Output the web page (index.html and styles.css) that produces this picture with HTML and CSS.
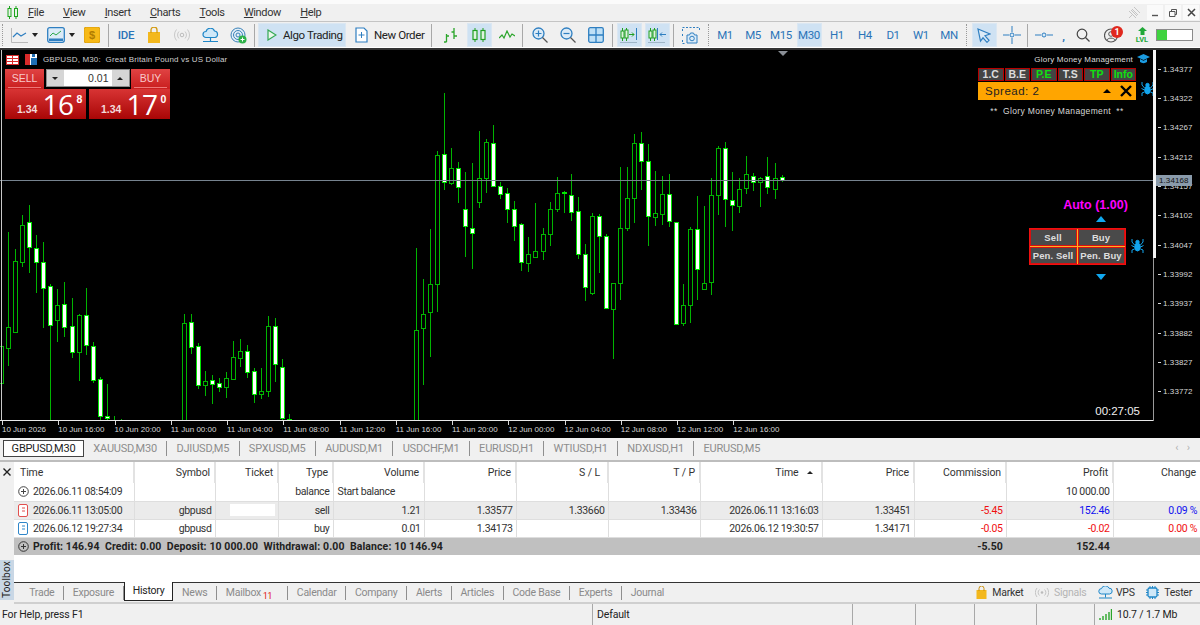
FILE: index.html
```html
<!DOCTYPE html>
<html lang="en">
<head>
  <meta charset="UTF-8">
  <title>GBPUSD,M30</title>
  <link rel="stylesheet" href="styles.css">
</head>
<body>

  <!-- menu -->
  <div class="menubar">
    <svg class="menu-logo" width="12" height="13" viewBox="0 0 12 13"><path d="M2.5 0v13M9 0v13" stroke="#1fa51f"/><rect x="1" y="2.5" width="3" height="8" fill="#e6f5e6" stroke="#1fa51f"/><rect x="7.5" y="2.5" width="3" height="8" fill="#e6f5e6" stroke="#1fa51f"/></svg>
    <span class="menu-item"><u>F</u>ile</span>
    <span class="menu-item"><u>V</u>iew</span>
    <span class="menu-item"><u>I</u>nsert</span>
    <span class="menu-item"><u>C</u>harts</span>
    <span class="menu-item"><u>T</u>ools</span>
    <span class="menu-item"><u>W</u>indow</span>
    <span class="menu-item"><u>H</u>elp</span>
    <div class="win-btns">
      <svg class="win-pin" width="14" height="14" viewBox="0 0 14 14"><path d="M2 12 6 8M5 3l6 6M7 1l6 6M4 4 10 10M2 5l7 7" stroke="#c4c4c4" fill="none"/></svg>
      <span class="win-btn"><svg width="8" height="8" viewBox="0 0 8 8"><path d="M1 6.5h6" stroke="#555" stroke-width="1.4"/></svg></span>
      <span class="win-btn"><svg width="10" height="10" viewBox="0 0 10 10"><path d="M1.5 3.5h5.5v5h-5.500zM3.500 3.500v-2h5v5h-1.500" fill="none" stroke="#555"/></svg></span>
      <span class="win-btn"><svg width="9" height="9" viewBox="0 0 9 9"><path d="M1 1l7 7M8 1l-7 7" stroke="#444" stroke-width="1.500"/></svg></span>
    </div>
  </div>

  <!-- toolbar -->
  <div class="toolbar">
    <i class="grip first-grip"></i>
    <div class="tool-drop">
      <svg width="17" height="15" viewBox="0 0 17 15"><path d="M.5 0v14.500H17" stroke="#b9b9b9" fill="none"/><path d="M2 9l4-4 4 3 5-3" stroke="#2f7fc1" fill="none" stroke-width="1.200"/></svg>
      <b class="caret"></b>
    </div>
    <div class="tool-drop">
      <svg width="18" height="16" viewBox="0 0 18 16"><rect x=".7" y=".7" width="16.600" height="14.600" rx="2" fill="#dcebf7" stroke="#2f7fc1" stroke-width="1.300"/><rect x="2" y="11.500" width="14" height="2.500" fill="#2f7fc1"/><path d="M3 9l3-3 3 2 5-4" stroke="#2aa84a" fill="none"/></svg>
      <b class="caret"></b>
    </div>
    <div class="tool"><svg width="16" height="16" viewBox="0 0 16 16"><rect width="16" height="16" rx="2.500" fill="#f7b917" stroke="#d79a08"/><text x="8" y="12" class="ico-dollar">$</text></svg></div>
    <i class="sep sep-a"></i>
    <div class="tool tool-ide">IDE</div>
    <div class="tool"><svg width="14" height="16" viewBox="0 0 14 16"><path d="M1 5h12v11H1z" fill="#f3b81d"/><path d="M4 6V3a3 3 0 0 1 6 0v3" fill="none" stroke="#d39a10" stroke-width="1.300"/></svg></div>
    <div class="tool"><svg width="16" height="12" viewBox="0 0 16 12"><circle cx="8" cy="6" r="1.800" fill="none" stroke="#bbb"/><path d="M5 2.500a5 5 0 0 0 0 7M11 2.500a5 5 0 0 1 0 7M2.500 .5a8.500 8.500 0 0 0 0 11M13.500 .5a8.500 8.500 0 0 1 0 11" fill="none" stroke="#c8c8c8"/></svg></div>
    <div class="tool"><svg width="17" height="15" viewBox="0 0 17 15"><path d="M4 9.500a3 3 0 0 1 0-6 4.500 4.500 0 0 1 8.500-.500 3.300 3.300 0 0 1 .500 6.500z" fill="#cfe8f8" stroke="#1f86c7" stroke-width="1.200"/><path d="M8.500 9.500V13M1 13.500h15" stroke="#1f86c7" stroke-width="1.200"/></svg></div>
    <div class="tool"><svg width="17" height="17" viewBox="0 0 17 17"><circle cx="8" cy="8" r="7" fill="#e2eef7" stroke="#3a82b8"/><circle cx="8" cy="8" r="4.500" fill="none" stroke="#3a82b8"/><circle cx="8" cy="8" r="2" fill="none" stroke="#3a82b8"/><circle cx="12.500" cy="12.500" r="4" fill="#2fb24a"/><path d="M12.500 10.500v4M10.500 12.500h4" stroke="#fff"/></svg></div>
    <i class="sep sep-b"></i>
    <div class="algo-btn">
      <svg width="10" height="12" viewBox="0 0 10 12"><path d="M1 1l8 5-8 5z" fill="#e9f7ea" stroke="#33a853" stroke-width="1.200"/></svg>
      <span>Algo Trading</span>
    </div>
    <div class="new-order">
      <svg width="13" height="16" viewBox="0 0 13 16"><path d="M1 1h8l3 3v11H1z" fill="#fff" stroke="#2f7fc1" stroke-width="1.200"/><path d="M6.500 5v6M3.500 8h6" stroke="#2f7fc1"/></svg>
      <span>New Order</span>
    </div>
    <i class="sep sep-c"></i>
    <div class="tool"><svg width="16" height="16" viewBox="0 0 16 16"><path d="M3.500 7v8M1 15h2.500M3.500 9H6M11 1v11M8.500 5H11M11 9h3" stroke="#2aa52a" stroke-width="1.300" fill="none"/></svg></div>
    <div class="tool active"><svg width="14" height="14" viewBox="0 0 14 14"><path d="M3 0v14M11 0v14" stroke="#21a021"/><rect x="1" y="2.500" width="4" height="9" fill="#dff3df" stroke="#21a021" stroke-width="1.200"/><rect x="9" y="2.500" width="4" height="9" fill="#dff3df" stroke="#21a021" stroke-width="1.200"/></svg></div>
    <div class="tool"><svg width="16" height="10" viewBox="0 0 16 10"><path d="M0 8l3-3 2 3 3-7 3 6 2-3 3 2" stroke="#2aa52a" stroke-width="1.200" fill="none"/></svg></div>
    <i class="sep sep-d"></i>
    <div class="tool"><svg width="16" height="16" viewBox="0 0 16 16"><circle cx="6.500" cy="6.500" r="5.500" fill="#dcebf7" stroke="#2f7fc1" stroke-width="1.300"/><path d="M10.500 10.500 15.500 15.500" stroke="#555" stroke-width="1.300"/><path d="M3.500 6.500h6M6.500 3.500v6" stroke="#2f7fc1" stroke-width="1.200"/></svg></div>
    <div class="tool"><svg width="16" height="16" viewBox="0 0 16 16"><circle cx="6.500" cy="6.500" r="5.500" fill="#dcebf7" stroke="#2f7fc1" stroke-width="1.300"/><path d="M10.500 10.500 15.500 15.500" stroke="#555" stroke-width="1.300"/><path d="M3.500 6.500h6" stroke="#2f7fc1" stroke-width="1.200"/></svg></div>
    <div class="tool"><svg width="16" height="16" viewBox="0 0 16 16"><rect x=".7" y=".7" width="14.600" height="14.600" rx="1.500" fill="#bfe0f6" stroke="#2f7fc1" stroke-width="1.300"/><path d="M8 1v14M1 8h14" stroke="#2f7fc1" stroke-width="1.300"/></svg></div>
    <i class="sep sep-e"></i>
    <div class="tool active"><svg width="18" height="15" viewBox="0 0 18 15"><path d="M2.500 0v13M6.500 0v13" stroke="#21a021"/><rect x="1" y="3" width="3" height="7" fill="#dff3df" stroke="#21a021"/><rect x="5" y="2" width="3" height="8" fill="#dff3df" stroke="#21a021"/><path d="M9 6.500h5M12 4.500l2 2-2 2" stroke="#21a021" fill="none"/><path d="M16.500 0v12" stroke="#2f7fc1"/><path d="M0 14.500h17" stroke="#9fb6c8"/></svg></div>
    <div class="tool active"><svg width="18" height="15" viewBox="0 0 18 15"><path d="M2.500 0v13M6.500 0v13" stroke="#21a021"/><rect x="1" y="3" width="3" height="7" fill="#dff3df" stroke="#21a021"/><rect x="5" y="2" width="3" height="8" fill="#dff3df" stroke="#21a021"/><path d="M9.500 0v12" stroke="#2f7fc1"/><path d="M12 6.500h6M14 4.500l-2 2 2 2" stroke="#2f7fc1" fill="none"/><path d="M0 14.500h17" stroke="#9fb6c8"/></svg></div>
    <i class="sep sep-f"></i>
    <div class="tool"><svg width="18" height="17" viewBox="0 0 18 17"><path d="M.5 4V.5h17V4M.5 7v3M.5 13v3.500h2" stroke="#2f7fc1" stroke-dasharray="2 1.500" fill="none"/><path d="M5 16V8h2.500l1-2h3l1 2H15v8z" fill="#dcebf7" stroke="#2f7fc1"/><circle cx="10" cy="11.500" r="2.300" fill="none" stroke="#2f7fc1"/></svg></div>
    <i class="grip grip-a"></i>
    <div class="tool tf">M1</div>
    <div class="tool tf">M5</div>
    <div class="tool tf">M15</div>
    <div class="tool tf active">M30</div>
    <div class="tool tf">H1</div>
    <div class="tool tf">H4</div>
    <div class="tool tf">D1</div>
    <div class="tool tf">W1</div>
    <div class="tool tf">MN</div>
    <i class="grip grip-b"></i>
    <div class="tool active"><svg width="14" height="15" viewBox="0 0 14 15"><path d="M1 1l12 5-5 1.800 4 4.500-2 2-4-4.500L3.500 13z" fill="#dcebf7" stroke="#2f7fc1" stroke-width="1.200"/></svg></div>
    <div class="tool"><svg width="18" height="18" viewBox="0 0 18 18"><path d="M9 0v6M9 12v6M0 9h6M12 9h6" stroke="#2f7fc1"/><circle cx="9" cy="9" r="2" fill="#dcebf7" stroke="#2f7fc1"/></svg></div>
    <i class="sep sep-g"></i>
    <div class="tool"><svg width="18" height="6" viewBox="0 0 18 6"><path d="M0 3h6M12 3h6" stroke="#2f7fc1"/><circle cx="9" cy="3" r="2" fill="#dcebf7" stroke="#2f7fc1"/></svg></div>
    <div class="tool-comma">,</div>
    <div class="tool"><svg width="14" height="14" viewBox="0 0 14 14"><circle cx="6" cy="6" r="4.800" fill="none" stroke="#444" stroke-width="1.200"/><path d="M9.500 9.500 13.500 13.500" stroke="#444" stroke-width="1.300"/></svg></div>
    <div class="tool user-tool">
      <svg width="15" height="15" viewBox="0 0 15 15"><circle cx="7" cy="7.500" r="6.500" fill="none" stroke="#555" stroke-width="1.200"/><circle cx="7" cy="6" r="2.300" fill="none" stroke="#555"/><path d="M3 12c1-2.500 7-2.500 8 0" fill="none" stroke="#555"/></svg>
      <span class="badge">1</span>
    </div>
    <div class="tool lvl-tool">
      <svg width="9" height="8" viewBox="0 0 9 8"><path d="M4.500 0 9 4H6.500v4h-4V4H0z" fill="#21a838"/></svg>
      <span>LVL</span>
    </div>
    <div class="level-bar"><span class="level-fill"></span></div>
  </div>

  <!-- chart -->
  <div class="chart-panel">
    <div class="plot">
      <svg id="candles" class="candles" width="1153" height="371" viewBox="0 50 1153 371"></svg>
      <div class="shift-mark"></div>

      <div class="chart-title">
        <svg width="13" height="10" viewBox="0 0 13 10"><rect x=".5" y=".5" width="12" height="9" fill="#fff" stroke="#d92a2a"/><path d="M0 3.500h13M0 6.500h13M6.500 0v10" stroke="#d92a2a"/></svg>
        <svg width="12" height="11" viewBox="0 0 12 11"><rect width="12" height="11" fill="#fff"/><rect width="5" height="11" fill="#d92a2a"/><rect x="6" y="4" width="6" height="7" fill="#1f6fb5"/><rect x="7" y="0" width="3" height="3" fill="#1f6fb5"/></svg>
        <span>GBPUSD, M30:&nbsp; Great Britain Pound vs US Dollar</span>
      </div>

      <!-- one click trading -->
      <div class="oneclick">
        <div class="oc-top">
          <div class="oc-side"><span>SELL</span></div>
          <div class="oc-lot">
            <span class="oc-step"><b class="tri-down"></b></span>
            <span class="oc-value">0.01</span>
            <span class="oc-step"><b class="tri-up"></b></span>
          </div>
          <div class="oc-side"><span>BUY</span></div>
        </div>
        <div class="oc-prices">
          <div class="oc-price"><small>1.34</small><strong>16</strong><sup>8</sup></div>
          <div class="oc-price"><small>1.34</small><strong>17</strong><sup>0</sup></div>
        </div>
      </div>

      <!-- money management panel -->
      <div class="gm-title">
        <span>Glory Money Management</span>
        <svg width="13" height="11" viewBox="0 0 13 11"><path d="M6.500 0 13 3 6.500 6 0 3z" fill="#1b9be0"/><path d="M3 5v3c2 1.500 5 1.500 7 0V5L6.500 6.800z" fill="#1b9be0"/></svg>
      </div>
      <div class="gm-panel">
        <div class="gm-btns">
          <span class="gm-btn">1.C</span>
          <span class="gm-btn">B.E</span>
          <span class="gm-btn on">P.E</span>
          <span class="gm-btn">T.S</span>
          <span class="gm-btn on">TP</span>
          <span class="gm-btn on">Info</span>
        </div>
        <div class="gm-spread">
          <span>Spread: 2</span>
          <b class="gm-up"></b>
          <svg width="12" height="12" viewBox="0 0 12 12"><path d="M1 1l10 10M11 1 1 11" stroke="#000" stroke-width="2.400"/></svg>
        </div>
        <div class="gm-note">** &nbsp;Glory Money Management&nbsp; **</div>
      </div>
      <svg class="spider spider-a" width="13" height="14" viewBox="0 0 13 14"><use href="#spider"/></svg>

      <!-- order panel -->
      <div class="auto-panel">
        <div class="auto-label">Auto (1.00)</div>
        <b class="arrow-up"></b>
        <div class="order-grid">
          <span>Sell</span><span>Buy</span>
          <span>Pen. Sell</span><span>Pen. Buy</span>
        </div>
        <b class="arrow-down"></b>
      </div>
      <svg class="spider spider-b" width="13" height="14" viewBox="0 0 13 14">
        <defs><g id="spider" fill="none" stroke="#12a5ee"><ellipse cx="6.500" cy="8" rx="2.800" ry="4" fill="#12a5ee"/><circle cx="6.500" cy="3" r="1.700" fill="#12a5ee"/><path d="M3.500 6 1 3V0M3.500 8 .5 6.500M3.500 10 1 11v3M9.500 6 12 3V0M9.500 8l3-1.500M9.500 10l2.500 1v3"/></g></defs>
        <use href="#spider"/>
      </svg>

      <div class="countdown">00:27:05</div>
    </div>

    <div class="price-axis">
      <span class="axis-bar"></span>
      <span class="price">1.34377</span>
      <span class="price">1.34322</span>
      <span class="price">1.34267</span>
      <span class="price">1.34212</span>
      <span class="price">1.34157</span>
      <span class="price">1.34102</span>
      <span class="price">1.34047</span>
      <span class="price">1.33992</span>
      <span class="price">1.33937</span>
      <span class="price">1.33882</span>
      <span class="price">1.33827</span>
      <span class="price">1.33772</span>
      <span class="price-tag">1.34168</span>
    </div>

    <div class="time-axis">
      <span>10 Jun 2026</span>
      <span>10 Jun 16:00</span>
      <span>10 Jun 20:00</span>
      <span>11 Jun 00:00</span>
      <span>11 Jun 04:00</span>
      <span>11 Jun 08:00</span>
      <span>11 Jun 12:00</span>
      <span>11 Jun 16:00</span>
      <span>11 Jun 20:00</span>
      <span>12 Jun 00:00</span>
      <span>12 Jun 04:00</span>
      <span>12 Jun 08:00</span>
      <span>12 Jun 12:00</span>
      <span>12 Jun 16:00</span>
    </div>
  </div>

  <!-- chart tabs -->
  <div class="chart-tabs">
    <span class="chart-tab current">GBPUSD,M30</span>
    <span class="chart-tab">XAUUSD,M30</span>
    <span class="chart-tab">DJIUSD,M5</span>
    <span class="chart-tab">SPXUSD,M5</span>
    <span class="chart-tab">AUDUSD,M1</span>
    <span class="chart-tab">USDCHF,M1</span>
    <span class="chart-tab">EURUSD,H1</span>
    <span class="chart-tab">WTIUSD,H1</span>
    <span class="chart-tab">NDXUSD,H1</span>
    <span class="chart-tab last">EURUSD,M5</span>
    <span class="tab-arrows">‹ &nbsp; ›</span>
  </div>

  <!-- toolbox -->
  <div class="toolbox">
    <div class="toolbox-strip">
      <svg width="8" height="8" viewBox="0 0 8 8"><path d="M.5.5l7 7M7.500.5l-7 7" stroke="#222" stroke-width="1.400"/></svg>
      <span class="toolbox-label">Toolbox</span>
    </div>
    <div class="toolbox-main">
      <div class="history-wrap">
        <table class="history">
          <colgroup>
            <col class="c-time"><col class="c-symbol"><col class="c-ticket"><col class="c-type"><col class="c-vol">
            <col class="c-num"><col class="c-num"><col class="c-num"><col class="c-close"><col class="c-num"><col class="c-num">
            <col class="c-profit"><col>
          </colgroup>
          <thead>
            <tr>
              <th class="left">Time</th><th>Symbol</th><th>Ticket</th><th>Type</th><th>Volume</th><th>Price</th>
              <th class="sl">S / L</th><th>T / P</th><th>Time <b class="sort-up"></b></th><th>Price</th><th>Commission</th><th>Profit</th><th>Change</th>
            </tr>
          </thead>
          <tbody>
            <tr>
              <td class="left"><span class="row-time"><svg class="ico-plus" width="11" height="11" viewBox="0 0 11 11"><circle cx="5.500" cy="5.500" r="4.800" fill="none" stroke="#444"/><path d="M3 5.500h5M5.500 3v5" stroke="#444"/></svg>2026.06.11 08:54:09</span></td>
              <td></td><td></td><td>balance</td><td class="left">Start balance</td><td></td><td></td><td></td><td></td><td></td><td></td><td>10 000.00</td><td></td>
            </tr>
            <tr class="alt">
              <td class="left"><span class="row-time"><svg width="11" height="13" viewBox="0 0 11 13"><rect x=".5" y=".5" width="9" height="12" rx="1.500" fill="#fff" stroke="#e2504e"/><path d="M4 4h3M4 7h3" stroke="#e2504e"/></svg>2026.06.11 13:05:00</span></td>
              <td>gbpusd</td><td class="smear"><span></span></td><td>sell</td><td>1.21</td><td>1.33577</td><td>1.33660</td><td>1.33436</td><td>2026.06.11 13:16:03</td><td>1.33451</td><td class="neg">-5.45</td><td class="pos">152.46</td><td class="pos">0.09 %</td>
            </tr>
            <tr>
              <td class="left"><span class="row-time"><svg width="11" height="13" viewBox="0 0 11 13"><rect x=".5" y=".5" width="9" height="12" rx="1.500" fill="#fff" stroke="#2f86c9"/><path d="M4 4h3M4 7h3" stroke="#2f86c9"/></svg>2026.06.12 19:27:34</span></td>
              <td>gbpusd</td><td></td><td>buy</td><td>0.01</td><td>1.34173</td><td></td><td></td><td>2026.06.12 19:30:57</td><td>1.34171</td><td class="neg">-0.05</td><td class="neg">-0.02</td><td class="neg">0.00 %</td>
            </tr>
            <tr class="total">
              <td class="left" colspan="6"><span class="row-time"><svg class="ico-plus" width="11" height="11" viewBox="0 0 11 11"><circle cx="5.500" cy="5.500" r="4.800" fill="none" stroke="#333"/><path d="M3 5.500h5M5.500 3v5" stroke="#333"/></svg>Profit: 146.94&nbsp; Credit: 0.00&nbsp; Deposit: 10 000.00&nbsp; Withdrawal: 0.00&nbsp; Balance: 10 146.94</span></td>
              <td></td><td></td><td></td><td></td><td>-5.50</td><td>152.44</td><td></td>
            </tr>
          </tbody>
        </table>
      </div>
      <div class="bottom-tabs">
        <span class="b-tab">Trade</span>
        <span class="b-tab">Exposure</span>
        <span class="b-tab current">History</span>
        <span class="b-tab">News</span>
        <span class="b-tab mail">Mailbox<sub>11</sub></span>
        <span class="b-tab">Calendar</span>
        <span class="b-tab">Company</span>
        <span class="b-tab">Alerts</span>
        <span class="b-tab">Articles</span>
        <span class="b-tab">Code Base</span>
        <span class="b-tab">Experts</span>
        <span class="b-tab last">Journal</span>
        <div class="services">
          <span class="service"><svg width="11" height="13" viewBox="0 0 11 13"><path d="M.5 4h10v9H.5z" fill="#f3b81d"/><path d="M3 5V2.500a2.500 2.500 0 0 1 5 0V5" fill="none" stroke="#c98f0c"/></svg>Market</span>
          <span class="service off"><svg width="14" height="9" viewBox="0 0 14 9"><circle cx="7" cy="4.500" r="1.300" fill="#bbb"/><path d="M4.500 1.500a4 4 0 0 0 0 6M9.500 1.500a4 4 0 0 1 0 6M2 0a7 7 0 0 0 0 9M12 0a7 7 0 0 1 0 9" fill="none" stroke="#c4c4c4"/></svg>Signals</span>
          <span class="service vps"><svg width="15" height="13" viewBox="0 0 15 13"><path d="M3.500 8a2.700 2.700 0 0 1 0-5.400 4 4 0 0 1 7.500-.400 2.900 2.900 0 0 1 .500 5.800z" fill="#cfe8f8" stroke="#1f86c7"/><path d="M7.500 8v3.500M1 12h13" stroke="#1f86c7"/></svg>VPS</span>
          <span class="service"><svg width="13" height="13" viewBox="0 0 13 13"><rect x="2" y="2" width="9" height="9" rx="1.500" fill="#cfe8f8" stroke="#1f86c7" stroke-width="1.300"/><path d="M4 0v2M6.500 0v2M9 0v2M4 11v2M6.500 11v2M9 11v2M0 4h2M0 6.500h2M0 9h2M11 4h2M11 6.500h2M11 9h2" stroke="#1f86c7"/></svg>Tester</span>
        </div>
      </div>
    </div>
  </div>

  <!-- status -->
  <div class="statusbar">
    <span class="st st-help">For Help, press F1</span>
    <span class="st st-profile">Default</span>
    <span class="st st-a"></span>
    <span class="st st-b"></span>
    <span class="st st-c"></span>
    <span class="st st-d"></span>
    <span class="st st-net">
      <svg width="13" height="11" viewBox="0 0 13 11"><path d="M1 11V9M4 11V7M7 11V5M10 11V3M12.500 11V0" stroke="#2aa52a" stroke-width="1.400"/></svg>
      10.7 / 1.7 Mb
    </span>
  </div>

  <script src="chart.js"></script>
</body>
</html>
```

FILE: styles.css
```css
* {
  box-sizing: border-box;
}

html, body {
  margin: 0;
  padding: 0;
}

body {
  width: 1200px;
  height: 625px;
  overflow: hidden;
  display: flex;
  flex-direction: column;
  background-color: #f0f0f0;
  font-family: Roboto, "Liberation Sans", sans-serif;
  font-size: 11px;
  color: #222;
}

svg {
  flex: none;
}

/* menu */
.menubar {
  height: 22px;
  padding-left: 7px;
  display: flex;
  align-items: center;
  border-top: 4px solid #fbfbfb;
  border-bottom: 1px solid #c4c4c4;
  font-size: 11px;
  letter-spacing: -.35px;
  color: #333;
}

.menu-logo {
  margin-right: 9px;
}

.menu-item {
  margin-right: 19.200px;
}

.win-btns {
  margin-left: auto;
  display: flex;
  align-items: center;
  gap: 2px;
  padding-right: 1px;
}

.win-pin {
  margin-right: 4px;
}

.win-btn {
  width: 16px;
  height: 15px;
  background-color: #fafafa;
  display: flex;
  align-items: center;
  justify-content: center;
}

/* toolbar */
.toolbar {
  height: 28px;
  display: flex;
  align-items: center;
  border-bottom: 2px solid #333;
  box-shadow: inset 0 -1px 0 #fff;
  color: #1f6fb5;
}

.tool {
  width: 28px;
  height: 24px;
  flex: none;
  display: flex;
  align-items: center;
  justify-content: center;
}

.tool.active {
  background: #cfe2f3;
  border: 1px solid #dbe7f2;
  width: 25px;
  margin: 0 1.5px;
}

.tf {
  font-size: 11.5px;
  letter-spacing: -.4px;
  color: #2a74b8;
}

.tool-ide {
  font-size: 11.5px;
  font-weight: 500;
  letter-spacing: -.3px;
  color: #2a74b8;
}

.ico-dollar {
  font: bold 11px "Liberation Sans", sans-serif;
  text-anchor: middle;
  fill: #b17c00;
}

.tool-drop {
  width: 36px;
  flex: none;
  display: flex;
  align-items: center;
  padding-left: 5px;
  gap: 4px;
}

.caret {
  width: 0;
  height: 0;
  border: 3.500px solid transparent;
  border-top: 4px solid #222;
  border-bottom: 0;
}

.sep {
  width: 1px;
  height: 23px;
  flex: none;
  background-color: #a8a8a8;
}

.sep-a { margin: 0 3px 0 2px; }
.sep-b { margin: 0 3px 0 2px; }
.sep-c { margin: 0 5px 0 5px; }
.sep-d { margin: 0 3px 0 1px; }
.sep-e { margin: 0 2px 0 2px; }
.sep-f { margin: 0 3px 0 2px; }
.sep-g { margin: 0 2px 0 1px; }

.grip {
  width: 1px;
  height: 22px;
  flex: none;
  border-left: 1px dotted #9a9a9a;
}

.first-grip { margin-left: 2px; margin-right: 3px; }
.grip-a { margin: 0 2px 0 3px; }
.grip-b { margin: 0 3px 0 3px; }

.algo-btn {
  width: 88px;
  height: 24px;
  flex: none;
  display: flex;
  align-items: center;
  gap: 6px;
  padding-left: 8px;
  background: #cfe2f3;
  border: 1px solid #dbe7f2;
  font-size: 11.5px;
  letter-spacing: -.4px;
  white-space: nowrap;
  color: #222;
}

.new-order {
  width: 76px;
  margin-left: 4px;
  flex: none;
  display: flex;
  align-items: center;
  gap: 6px;
  padding-left: 5px;
  font-size: 11.5px;
  letter-spacing: -.4px;
  white-space: nowrap;
  color: #222;
}

.tool-comma {
  width: 11px;
  flex: none;
  padding-top: 3px;
  text-align: center;
  font-weight: bold;
}

.user-tool {
  position: relative;
}

.badge {
  position: absolute;
  left: 14px;
  top: 3px;
  width: 12px;
  height: 12px;
  border-radius: 50%;
  background-color: #e0281e;
  color: #fff;
  font-size: 9px;
  font-weight: bold;
  line-height: 12px;
  text-align: center;
}

.lvl-tool {
  margin-left: 3px;
  flex-direction: column;
  font-size: 7.500px;
  font-weight: bold;
  color: #21a838;
  line-height: 8px;
  gap: 1px;
}

.level-bar {
  width: 37px;
  height: 12px;
  flex: none;
  background-color: #fff;
  border: 1px solid #8a8a8a;
}

.level-fill {
  display: block;
  width: 10px;
  height: 100%;
  background-color: #3fd33f;
}

/* chart */
.chart-panel {
  height: 388px;
  flex: none;
  background-color: #000;
  display: grid;
  grid-template-columns: 1153px 47px;
  grid-template-rows: 371px 17px;
  font-family: "Liberation Sans", sans-serif;
  color: #d8d8d8;
}

.plot {
  position: relative;
  overflow: hidden;
  border-bottom: 1px solid #e8e8e8;
}

.candles {
  display: block;
}

.shift-mark {
  position: absolute;
  left: 778px;
  top: 1px;
  width: 0;
  height: 0;
  border: 5px solid transparent;
  border-top: 5px solid #8a8f96;
  border-bottom: 0;
}

.chart-title {
  position: absolute;
  left: 6px;
  top: 4px;
  display: flex;
  align-items: center;
  gap: 6px;
  font-size: 8px;
  color: #cfcfcf;
  letter-spacing: .15px;
}

.oneclick {
  position: absolute;
  left: 5px;
  top: 19px;
  width: 165px;
}

.oc-top {
  height: 20px;
  display: flex;
  justify-content: space-between;
}

.oc-side {
  width: 39px;
  padding: 0 3px;
  background: linear-gradient(#e04343, #c91e1e);
  text-align: center;
  font-size: 10.500px;
  line-height: 18px;
  color: #f8c9c9;
}

.oc-side span {
  display: block;
  height: 19px;
  border-bottom: 1px solid #ee7777;
}

.oc-lot {
  width: 84px;
  height: 18px;
  background-color: #d6d6d6;
  border: 1px solid #8d8d8d;
  display: flex;
  align-items: center;
  color: #333;
}

.oc-step {
  width: 17px;
  height: 100%;
  display: flex;
  align-items: center;
  justify-content: center;
}

.oc-value {
  flex: 1;
  height: 100%;
  background-color: #fff;
  text-align: right;
  padding-right: 3px;
  font-size: 10.500px;
  line-height: 16px;
}

.tri-down, .tri-up {
  width: 0;
  height: 0;
  border: 3px solid transparent;
}

.tri-down { border-top: 3px solid #222; border-bottom: 0; }
.tri-up { border-bottom: 3px solid #222; border-top: 0; }

.oc-prices {
  display: flex;
  justify-content: space-between;
}

.oc-price {
  width: 81px;
  height: 30px;
  padding-left: 12px;
  background: linear-gradient(#d83434, #a90606);
  color: #fff;
  display: flex;
  align-items: flex-start;
  line-height: 1;
}

.oc-price small {
  font-size: 10.500px;
  font-weight: bold;
  margin-top: 15px;
  margin-right: 5px;
  color: #f3dada;
}

.oc-price strong {
  font-size: 28px;
  font-weight: normal;
  margin-top: 1px;
  font-family: "Open Sans", sans-serif;
  letter-spacing: -.5px;
}

.oc-price sup {
  font-size: 10.500px;
  font-weight: bold;
  margin-top: 5px;
  margin-left: 3px;
}

.gm-title {
  position: absolute;
  right: 3px;
  top: 4px;
  display: flex;
  align-items: center;
  gap: 4px;
  font-size: 8px;
  letter-spacing: .2px;
  color: #dcdcdc;
}

.gm-panel {
  position: absolute;
  left: 978px;
  top: 18px;
  width: 158px;
}

.gm-btns {
  display: flex;
  gap: 1px;
}

.gm-btn {
  width: 26px;
  height: 13px;
  background-color: #444;
  border: 1px solid #b80000;
  text-align: center;
  font-size: 10.500px;
  font-weight: bold;
  line-height: 11px;
  color: #dcdcdc;
}

.gm-btn.on {
  color: #10e010;
}

.gm-spread {
  height: 18px;
  margin-top: 1px;
  padding: 0 4px 0 7px;
  background-color: #ffa500;
  display: flex;
  align-items: center;
  font-size: 11.500px;
  letter-spacing: .5px;
  color: #222;
}

.gm-up {
  margin-left: auto;
  margin-right: 9px;
  width: 0;
  height: 0;
  border: 4px solid transparent;
  border-bottom: 4px solid #000;
  border-top: 0;
}

.gm-note {
  margin-top: 6px;
  text-align: center;
  font-size: 8.500px;
  letter-spacing: .35px;
  color: #d8d8d8;
}

.spider {
  position: absolute;
}

.spider-a { left: 1141px; top: 32px; }
.spider-b { left: 1131px; top: 189px; }

.auto-panel {
  position: absolute;
  left: 1028px;
  top: 148px;
  width: 98px;
  display: flex;
  flex-direction: column;
  align-items: center;
}

.auto-label {
  margin-left: 37px;
  white-space: nowrap;
  font-size: 12.500px;
  font-weight: bold;
  color: #ff00ff;
}

.arrow-up, .arrow-down {
  width: 0;
  height: 0;
  border: 5.500px solid transparent;
}

.arrow-up {
  margin-top: 4px;
  margin-bottom: 6px;
  margin-left: 47px;
  border-bottom: 6px solid #10a8f0;
  border-top: 0;
}

.arrow-down {
  margin-top: 9px;
  margin-left: 47px;
  border-top: 6px solid #10a8f0;
  border-bottom: 0;
}

.order-grid {
  width: 97px;
  display: grid;
  grid-template-columns: 1fr 1fr;
  grid-auto-rows: 17px;
  gap: 1px;
  background-color: #ffb020;
  border: 1px solid #f01010;
}

.order-grid span {
  background-color: #4a4a4a;
  border: 1px solid #d81010;
  text-align: center;
  font-size: 9.500px;
  font-weight: bold;
  line-height: 15px;
  letter-spacing: .1px;
  white-space: nowrap;
  color: #dedede;
}

.countdown {
  position: absolute;
  right: 13px;
  bottom: 3px;
  font-size: 11.500px;
  color: #f0f0f0;
}

.price-axis {
  position: relative;
  padding-top: 4.500px;
  display: flex;
  flex-direction: column;
  border-left: 1px solid #9a9a9a;
  font-size: 8px;
}

.axis-bar {
  position: absolute;
  left: -1px;
  top: 0;
  width: 3px;
  height: 208px;
  background-color: #f4f4f4;
}

.price {
  height: 29.330px;
  display: flex;
  align-items: center;
  padding-left: 4px;
  letter-spacing: .1px;
}

.price::before {
  content: "";
  width: 3px;
  height: 1px;
  margin-right: 2px;
  background-color: #d8d8d8;
}

.price-tag {
  position: absolute;
  left: 2px;
  top: 125px;
  width: 36px;
  height: 11px;
  padding-left: 3px;
  background-color: #8a9bab;
  color: #111;
  line-height: 11px;
  letter-spacing: .1px;
}

.time-axis {
  grid-column: 1 / 3;
  display: flex;
  padding-left: 2px;
  font-size: 8px;
  white-space: nowrap;
}

.time-axis span {
  width: 56.250px;
  flex: none;
  position: relative;
  padding-top: 4px;
}

.time-axis span::before {
  content: "";
  position: absolute;
  left: 0;
  top: 0;
  width: 1px;
  height: 4px;
  background-color: #d8d8d8;
}

/* chart tabs */
.chart-tabs {
  height: 24px;
  flex: none;
  display: flex;
  align-items: flex-start;
  padding: 2px 0 0 3px;
  border-bottom: 2px solid #bdbdbd;
  font-size: 11px;
  color: #8d8d8d;
}

.chart-tab {
  height: 15px;
  padding: 0 9.300px;
  margin-top: 1px;
  line-height: 15px;
  border-right: 1px solid #8f8f8f;
  white-space: nowrap;
  letter-spacing: -.2px;
}

.chart-tab.current {
  width: 81px;
  height: 17px;
  padding: 0;
  margin-top: 0;
  text-align: center;
  background-color: #fff;
  border: 1px solid #444;
  color: #222;
}

.chart-tab.last {
  border-right: 0;
}

.tab-arrows {
  margin-left: auto;
  margin-right: 10px;
  margin-top: 1px;
  font-size: 11px;
  color: #b0b0b0;
}

/* toolbox */
.toolbox {
  height: 142px;
  flex: none;
  display: flex;
}

.toolbox-strip {
  width: 14px;
  flex: none;
  display: flex;
  flex-direction: column;
  align-items: center;
  justify-content: space-between;
  padding-top: 6px;
}

.toolbox-label {
  width: 14px;
  height: 40px;
  margin-bottom: 4px;
  background-color: #c9d7e5;
  writing-mode: vertical-rl;
  transform: rotate(180deg);
  text-align: center;
  line-height: 14px;
  font-size: 10px;
  letter-spacing: .2px;
}

.toolbox-main {
  flex: 1;
  min-width: 0;
  display: flex;
  flex-direction: column;
}

.history-wrap {
  height: 120px;
  background-color: #fff;
}

.history {
  width: 1186px;
  table-layout: fixed;
  border-collapse: collapse;
  font-size: 10.500px;
  letter-spacing: -.35px;
  color: #333;
}

.c-time { width: 120px; }
.c-symbol { width: 81px; }
.c-ticket { width: 63px; }
.c-type { width: 55px; }
.c-vol { width: 91px; }
.c-num { width: 92px; }
.c-close { width: 122px; }
.c-profit { width: 107px; }

.history th {
  height: 21px;
  padding: 0 4px;
  text-align: right;
  font-weight: normal;
  letter-spacing: -.1px;
  border-right: 2px solid #e2e2e2;
  white-space: nowrap;
}

.history th:last-child {
  border-right: 0;
}

.history th.left {
  padding-left: 6px;
  text-align: left;
}

.history th.sl {
  padding-right: 7px;
}

.sort-up {
  display: inline-block;
  margin: 0 4px 2px 6px;
  width: 0;
  height: 0;
  border: 3px solid transparent;
  border-bottom: 3px solid #222;
  border-top: 0;
}

.history td {
  height: 18px;
  padding: 0 3px 0 0;
  text-align: right;
  border-right: 1px solid #dedede;
  border-bottom: 1px solid #dedede;
  white-space: nowrap;
  overflow: visible;
}

.history td:last-child {
  border-right: 0;
}

.history td.left {
  padding-left: 4px;
  text-align: left;
}

.row-time {
  display: flex;
  align-items: center;
  gap: 4px;
}

.history tr.alt td {
  background-color: #ebebeb;
}

.history tr.total td {
  background-color: #c0c0c0;
  border: 0;
  font-weight: bold;
  letter-spacing: .1px;
  color: #222;
}

.history .pos { color: #1010f0; }
.history .neg { color: #f01010; }

.smear span {
  display: block;
  height: 12px;
  margin-left: 14px;
  background-color: #fff;
}

.bottom-tabs {
  height: 22px;
  display: flex;
  align-items: center;
  padding-left: 6.500px;
  border-top: 1px solid #333;
  border-bottom: 2px solid #cfcfcf;
  font-size: 10.500px;
  letter-spacing: -.25px;
  color: #8a8a8a;
}

.b-tab {
  height: 14px;
  padding: 0 8.700px;
  line-height: 14px;
  border-right: 1px solid #8f8f8f;
  white-space: nowrap;
}

.b-tab.current {
  height: 19px;
  margin-top: -2px;
  padding: 0 8px;
  line-height: 17px;
  background-color: #fff;
  border: 1px solid #222;
  border-top: 0;
  color: #222;
}

.b-tab.mail {
  padding-right: 15px;
}

.b-tab sub {
  margin-left: 2px;
  font-size: 8.500px;
  color: #e01010;
}

.b-tab.last {
  border-right: 0;
}

.services {
  margin-left: auto;
  padding-right: 8px;
  display: flex;
  gap: 11.500px;
  color: #333;
}

.service {
  display: flex;
  align-items: center;
  gap: 5px;
  font-size: 10.500px;
  letter-spacing: -.25px;
}

.service.off {
  color: #b4b4b4;
}

.service.vps {
  gap: 3px;
}

/* status */
.statusbar {
  flex: 1;
  display: flex;
  align-items: center;
  font-size: 10.500px;
  letter-spacing: -.15px;
  color: #222;
}

.st {
  height: 100%;
  flex: none;
  padding-left: 4px;
  display: flex;
  align-items: center;
  border-left: 1px solid #a8a8a8;
}

.st-help { width: 592px; padding-left: 2px; border-left: 0; }
.st-profile { width: 260px; }
.st-a { width: 63px; }
.st-b { width: 59px; }
.st-c { width: 62px; }
.st-d { width: 58px; }
.st-net { flex: 1; gap: 5px; }
```

FILE: chart.js
```js
// [wick top, wick bottom, body top, body bottom, filled], y in page px
var blocks = [
  { start: 0, bars: [
    [340,392,346,383,0],[232,366,327,348,0],[249,332,261,332,0],[215,267,225,262,0],[205,273,222,247,1],
    [235,293,248,262,1],[242,328,262,288,1],[284,421,286,325,1],[289,342,305,320,0],[282,337,304,327,1],
    [298,358,326,352,1],[314,381,315,352,0],[288,355,315,345,1],[342,383,346,380,1],[377,421,379,416,1],
    [384,421,416,418,1],[416,421],[419,421]
  ]},
  { start: 26, bars: [
    [314,421,323,421,0],[314,354,322,347,1],[343,389,346,385,1],[371,396,381,385,0],[375,404,380,384,1],
    [378,392,383,387,1],[372,398,378,387,0],[341,379,357,379,0],[339,367,351,358,0],[345,378,351,372,1],
    [368,403,371,394,1],[368,399,391,394,0],[316,397,326,391,0],[318,382,326,364,1],[359,421,367,418,1],
    [414,421,419,421,1]
  ]},
  { start: 59, bars: [
    [248,421,330,421,0],[279,385,314,328,0],[229,357,284,312,0],[151,312,155,284,0],[93,190,154,182,1],
    [148,185,168,183,0],[162,203,168,187,1],[172,257,209,226,1],[163,269,228,233,1],[131,208,178,202,0],
    [139,193,142,178,0],[125,187,143,186,1],[182,199,186,194,1],[188,223,193,209,1],[201,241,209,226,1],
    [223,271,224,262,1],[237,272,254,263,0],[203,257,251,257,0],[228,260,234,251,0],[202,246,209,234,0],
    [177,212,193,209,0],[191,213,192,193,1],[174,221,195,212,1],[197,259,211,254,1],[244,301,254,287,1],
    [213,295,216,293,0],[214,273,216,236,1],[234,309,236,308,1],[283,359,283,309,0],[167,300,228,283,0],
    [167,231,198,228,0],[134,223,143,198,0],[132,190,143,161,1],[144,246,161,216,1],[171,226,213,217,0],
    [176,225,194,214,0],[174,227,194,221,1],[222,325,222,324,1],[284,326,305,323,0],[227,323,229,305,0],
    [196,300,229,269,1],[206,289,283,289,0],[178,295,195,282,0],[146,215,148,195,0],[142,227,148,199,1],
    [172,231,200,205,1],[178,213,189,206,0],[156,194,174,188,0],[173,191,176,182,1],[177,207,178,182,0],
    [157,194,176,187,1],[163,199,178,189,0],[175,182,177,180,1]
  ]}
];

var svg = document.getElementById("candles");
var out = "";

blocks.forEach(function (block) {
  block.bars.forEach(function (b, i) {
    var x = Math.floor(1.7 + 7.03 * (block.start + i)) + 0.5;
    out += '<path d="M' + x + ' ' + b[0] + 'V' + b[1] + '" stroke="#00b400"/>';
    if (b.length > 2) {
      var fill = b[4] ? "#fff" : "#000";
      var edge = b[4] ? "#00e600" : "#00b400";
      out += '<rect x="' + (x - 2) + '" y="' + (b[2] + 0.5) + '" width="4" height="' + Math.max(b[3] - b[2], 1) +
        '" fill="' + fill + '" stroke="' + edge + '"/>';
    }
  });
});

// bid line and left edge
out += '<path d="M0 180.500H1153" stroke="#76838f"/>';
out += '<path d="M1.500 50V421" stroke="#c8c8c8"/>';

svg.innerHTML = out;
svg.setAttribute("shape-rendering", "crispEdges");
```
